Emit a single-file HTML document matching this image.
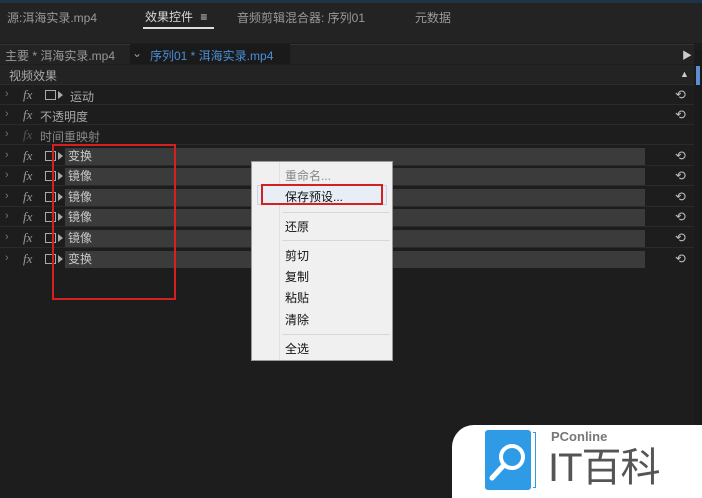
<!DOCTYPE html>
<html><head><meta charset="utf-8"><style>
*{margin:0;padding:0;box-sizing:border-box}
body{width:702px;height:498px;background:#1d1d1d;position:relative;overflow:hidden;font-family:"Liberation Sans","Noto Sans CJK SC",sans-serif;font-size:12px;color:#a8a8a8}
.a{position:absolute;white-space:nowrap}
.row{position:absolute;left:0;width:694px;height:20px;border-bottom:1px solid #2a2a2a}
.chev{position:absolute;left:5px;top:3px;color:#777;font-size:11px}
.fx{position:absolute;left:23px;top:2px;font-style:italic;font-family:"Liberation Serif",serif;font-size:13px;color:#999}
.ic{position:absolute;left:45px;top:5px;width:11px;height:10px;border:1.5px solid #aaa}
.tri{position:absolute;left:58px;top:6px;width:0;height:0;border-left:5px solid #aaa;border-top:4px solid transparent;border-bottom:4px solid transparent}
.bar{position:absolute;left:65px;top:2px;width:580px;height:17px;background:#3b3b3b;color:#c8c8c8;padding-left:3px;line-height:17px}
.rst{position:absolute;left:675px;top:2px;color:#bbb;font-size:13px}
.mi{position:absolute;left:285px;color:#111;font-size:12px}
.sep{position:absolute;left:282px;width:108px;height:1px;background:#d8d8d8}
</style></head><body>
<div class="a" style="left:0;top:0;width:702px;height:3px;background:#1f3347"></div>
<div class="a" style="left:0;top:3px;width:702px;height:40px;background:#232323"></div>
<div class="a" style="left:7px;top:9px;color:#999">源:洱海实录.mp4</div>
<div class="a" style="left:145px;top:8px;color:#d8d8d8">效果控件 <span style="margin-left:4px">≡</span></div>
<div class="a" style="left:143px;top:27px;width:71px;height:2px;background:#ddd"></div>
<div class="a" style="left:237px;top:9px;color:#999">音频剪辑混合器: 序列01</div>
<div class="a" style="left:415px;top:9px;color:#999">元数据</div>
<div class="a" style="left:0;top:44px;width:694px;height:20px;background:#232323;border-top:1px solid #333"></div>
<div class="a" style="left:130px;top:44px;width:160px;height:20px;background:#1a1a1a"></div>
<div class="a" style="left:5px;top:47px;color:#999">主要 * 洱海实录.mp4</div>
<div class="a" style="left:132px;top:46px;color:#999">⌄</div>
<div class="a" style="left:150px;top:47px;color:#4a8fd8">序列01 * 洱海实录.mp4</div>
<div class="a" style="left:682px;top:47px;color:#ccc;font-size:10px">▶</div>
<div class="a" style="left:0;top:65px;width:694px;height:20px;background:#232323;border-bottom:1px solid #2c2c2c"></div>
<div class="a" style="left:9px;top:67px;color:#aaa">视频效果</div>
<div class="a" style="left:680px;top:69px;color:#ccc;font-size:9px">▲</div>
<div class="a" style="left:695px;top:50px;width:7px;height:448px;background:#1a1a1a"></div>
<div class="a" style="left:696px;top:66px;width:4px;height:19px;background:#5a8fd0"></div>

<div class="row" style="top:85px"><span class="chev">›</span><span class="fx">fx</span><span class="ic"></span><span class="tri"></span><span class="a" style="left:70px;top:3px">运动</span><span class="rst">⟲</span></div>
<div class="row" style="top:105px"><span class="chev">›</span><span class="fx">fx</span><span class="a" style="left:40px;top:3px">不透明度</span><span class="rst">⟲</span></div>
<div class="row" style="top:125px"><span class="chev">›</span><span class="fx" style="color:#555">fx</span><span class="a" style="left:40px;top:3px;color:#888">时间重映射</span></div>

<div class="row" style="top:146px"><span class="chev">›</span><span class="fx">fx</span><span class="ic"></span><span class="tri"></span><span class="bar">变换</span><span class="rst">⟲</span></div>
<div class="row" style="top:166px"><span class="chev">›</span><span class="fx">fx</span><span class="ic"></span><span class="tri"></span><span class="bar">镜像</span><span class="rst">⟲</span></div>
<div class="row" style="top:187px"><span class="chev">›</span><span class="fx">fx</span><span class="ic"></span><span class="tri"></span><span class="bar">镜像</span><span class="rst">⟲</span></div>
<div class="row" style="top:207px"><span class="chev">›</span><span class="fx">fx</span><span class="ic"></span><span class="tri"></span><span class="bar">镜像</span><span class="rst">⟲</span></div>
<div class="row" style="top:228px"><span class="chev">›</span><span class="fx">fx</span><span class="ic"></span><span class="tri"></span><span class="bar">镜像</span><span class="rst">⟲</span></div>
<div class="row" style="top:249px;border:none"><span class="chev">›</span><span class="fx">fx</span><span class="ic"></span><span class="tri"></span><span class="bar">变换</span><span class="rst">⟲</span></div>

<div class="a" style="left:52px;top:144px;width:124px;height:156px;border:2px solid #d42020"></div>

<div class="a" style="left:251px;top:161px;width:142px;height:200px;background:#f0f0f0;border:1px solid #999"></div>
<div class="a" style="left:279px;top:162px;width:1px;height:198px;background:#e0e0e0"></div>
<div class="mi" style="top:167px;color:#888">重命名...</div>
<div class="a" style="left:257px;top:185px;width:130px;height:20px;background:#e8eef6;border:1px solid #c8d4e4"></div>
<div class="a" style="left:261px;top:184px;width:122px;height:21px;border:2px solid #d42020"></div>
<div class="mi" style="top:188px">保存预设...</div>
<div class="sep" style="top:212px"></div>
<div class="mi" style="top:218px">还原</div>
<div class="sep" style="top:240px"></div>
<div class="mi" style="top:247px">剪切</div>
<div class="mi" style="top:268px">复制</div>
<div class="mi" style="top:289px">粘贴</div>
<div class="mi" style="top:311px">清除</div>
<div class="sep" style="top:334px"></div>
<div class="mi" style="top:340px">全选</div>

<div class="a" style="left:452px;top:425px;width:250px;height:73px;background:#fff;border-top-left-radius:22px"></div>
<div class="a" style="left:485px;top:430px;width:46px;height:60px;background:#2f9be6;border-radius:3px"></div>
<div class="a" style="left:533px;top:432px;width:3px;height:56px;border:1.5px solid #2f9be6;border-left:none"></div>
<svg class="a" style="left:485px;top:430px" width="46" height="60"><circle cx="27" cy="27" r="11" fill="none" stroke="#fff" stroke-width="4"/><line x1="19" y1="35" x2="7" y2="48" stroke="#fff" stroke-width="5" stroke-linecap="round"/></svg>
<div class="a" style="left:551px;top:429px;color:#777;font-size:13px;font-weight:bold">PConline</div>
<div class="a" style="left:548px;top:444px;color:#555;font-size:40px;line-height:48px;letter-spacing:-1px">IT百科</div>
</body></html>
